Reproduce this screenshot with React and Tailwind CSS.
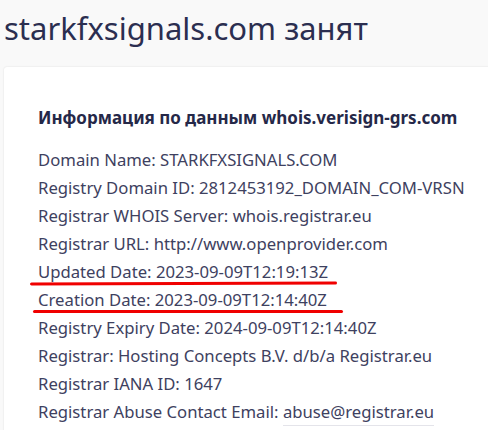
export default function App() {
  const lines = [
    "Domain Name: STARKFXSIGNALS.COM",
    "Registry Domain ID: 2812453192_DOMAIN_COM-VRSN",
    "Registrar WHOIS Server: whois.registrar.eu",
    "Registrar URL: http://www.openprovider.com",
    "Updated Date: 2023-09-09T12:19:13Z",
    "Creation Date: 2023-09-09T12:14:40Z",
    "Registry Expiry Date: 2024-09-09T12:14:40Z",
    "Registrar: Hosting Concepts B.V. d/b/a Registrar.eu",
    "Registrar IANA ID: 1647",
  ];
  return (
    <div className="w-[488px] h-[430px] overflow-hidden bg-[#f9f9f9]" style={{ fontFamily: '"Noto Sans", sans-serif' }}>
      <h1 className="pl-[4px] pt-[8px] text-[31px] leading-[40px] text-[#2b2e50]">starkfxsignals.com занят</h1>
      <div className="ml-[4px] mt-[19px] w-[500px] h-[400px] bg-white rounded-[3px] shadow-[0_0_2px_rgba(0,0,0,0.12)] pl-[34px] pt-[40px]">
        <div className="text-[17px] font-bold text-[#252848] leading-[22px]">Информация по данным whois.verisign-grs.com</div>
        <div className="mt-[17px] text-[16.7px] leading-[28px] text-[#3e4160]">
          {lines.map((l, i) => (
            <div key={i} className="relative">
              {l}
              {i === 4 && (
                <div className="absolute left-[-8px] top-[24px] w-[307px] h-[3px] bg-[#f00000] rounded-full -rotate-[0.2deg]" />
              )}
              {i === 5 && (
                <div className="absolute left-[-5px] top-[24px] w-[310px] h-[3px] bg-[#f00000] rounded-full" />
              )}
            </div>
          ))}
          <div>
            Registrar Abuse Contact Email:{" "}
            <span className="border-b border-[#e4e4ea] pb-[2px]">abuse@registrar.eu</span>
          </div>
        </div>
      </div>
    </div>
  );
}
